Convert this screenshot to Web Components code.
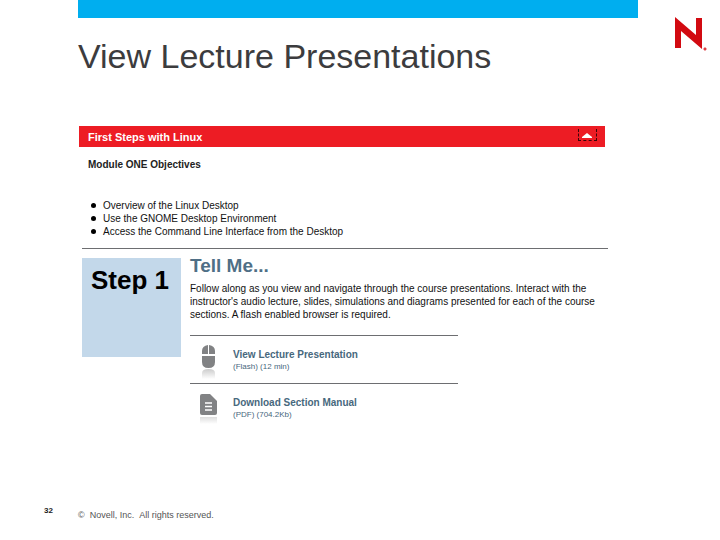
<!DOCTYPE html>
<html lang="en">
<head>
<meta charset="utf-8">
<title>View Lecture Presentations</title>
<style>
    body {
        margin: 0;
        background: #fff;
        font-family: "Liberation Sans", Arial, sans-serif;
    }
</style>
</head>
<body>

<slide-page>
    <novell-logo slot="logo"></novell-logo>
    <span slot="title">View Lecture Presentations</span>

    <section-bar>First Steps with Linux</section-bar>
    <module-objectives>
        <span slot="heading">Module ONE Objectives</span>
        <objective-item>Overview of the Linux Desktop</objective-item>
        <objective-item>Use the GNOME Desktop Environment</objective-item>
        <objective-item>Access the Command Line Interface from the Desktop</objective-item>
    </module-objectives>
    <course-step>
        <span slot="step">Step 1</span>
        <span slot="heading">Tell Me...</span>
        <span slot="text">Follow along as you view and navigate through the course presentations. Interact with the instructor's audio lecture, slides, simulations and diagrams presented for each of the course sections. A flash enabled browser is required.</span>
        <resource-link icon="mouse">View Lecture Presentation<span slot="meta">(Flash) (12 min)</span></resource-link>
        <resource-link icon="document">Download Section Manual<span slot="meta">(PDF) (704.2Kb)</span></resource-link>
    </course-step>

    <span slot="number">32</span>
    <span slot="copyright">© &nbsp;Novell, Inc. &nbsp;All rights reserved.</span>
</slide-page>

<script>
// HELPER

function define(name, markup) {
    customElements.define(name, class extends HTMLElement {
        constructor() {
            super();
            this.attachShadow({ mode: "open" }).innerHTML = markup;
        }
    });
}

// SLIDE

define("slide-page", `
    <style>
        :host {
            display: grid;
            grid-template-columns: 78px 1fr 82px;
            grid-template-rows: auto 1fr auto;
            min-height: 100vh;
        }
        .bar {
            height: 18px;
            background: #00aeef;
        }
        header {
            grid-column: 2;
        }
        h1 {
            margin: 0;
            padding-top: 18px;
            font-size: 34px;
            line-height: 40px;
            font-weight: normal;
            color: #3c3c3e;
            white-space: nowrap;
        }
        .logo {
            padding: 16px 0 0 36px;
        }
        main {
            grid-column: 2;
            padding: 50px 30px 0 0;
        }
        footer {
            grid-column: 1 / -1;
            display: grid;
            grid-template-columns: subgrid;
            padding-bottom: 19px;
            font-size: 8px;
            line-height: 12px;
            color: #555;
        }
        .number {
            padding-left: 44px;
            color: #222;
            font-weight: bold;
        }
        small {
            padding-top: 4px;
            font-size: 9px;
        }
    </style>
    <header>
        <div class="bar"></div>
        <h1><slot name="title"></slot></h1>
    </header>
    <div class="logo"><slot name="logo"></slot></div>
    <main><slot></slot></main>
    <footer>
        <span class="number"><slot name="number"></slot></span>
        <small><slot name="copyright"></slot></small>
    </footer>
`);

define("novell-logo", `
    <style>
        :host { display: block; }
        svg { display: block; }
    </style>
    <svg width="34" height="36" viewBox="0 0 34 36" role="img" aria-label="Novell">
        <path fill="#d20a11" d="M1 1 L22 19 V2 H28 V33 L7 15 V32 H1 Z"/>
        <circle cx="31" cy="33" r="1.2" fill="#e8666a" stroke="#d20a11" stroke-width=".6"/>
    </svg>
`);

// MODULE

define("section-bar", `
    <style>
        :host {
            display: flex;
            align-items: center;
            justify-content: space-between;
            height: 21px;
            margin: 0 3px 0 1px;
            padding: 0 8px 0 9px;
            background: #ed1c24;
            color: #fff;
        }
        h2 {
            margin: 0;
            font-size: 11px;
            line-height: 20px;
        }
        button {
            display: block;
            width: 19px;
            height: 12px;
            margin: 0 0 4px;
            padding: 0;
            border: 1px dashed #3a0508;
            border-top: 0;
            background: none;
        }
        svg { display: block; margin: 4px 0 0 3px; }
    </style>
    <h2><slot></slot></h2>
    <button type="button" aria-label="Collapse section">
        <svg width="10" height="6" viewBox="0 0 10 6"><path fill="#fff" d="M5 0 L10 4 V5 H0 V4 Z"/></svg>
    </button>
`);

define("module-objectives", `
    <style>
        :host {
            display: block;
            margin-left: 4px;
            padding: 12px 0 10px;
            border-bottom: 1px solid #6d6e71;
        }
        h3 {
            margin: 0 0 28px 6px;
            font-size: 10px;
            line-height: 12px;
            color: #222;
        }
        ul {
            margin: 0;
            padding: 0 0 0 9px;
        }
    </style>
    <h3><slot name="heading"></slot></h3>
    <ul role="list"><slot></slot></ul>
`);

define("objective-item", `
    <style>
        :host {
            display: flex;
            align-items: center;
            gap: 7px;
            font-size: 10px;
            line-height: 13px;
            color: #111;
        }
        :host::before {
            content: "";
            width: 5px;
            height: 5px;
            border-radius: 50%;
            background: #000;
        }
    </style>
    <span role="listitem"><slot></slot></span>
`);

// STEP

define("course-step", `
    <style>
        :host {
            display: grid;
            grid-template-columns: 99px 1fr;
            column-gap: 9px;
            align-items: start;
            margin-left: 4px;
            padding-top: 9px;
        }
        .step {
            height: 99px;
            padding: 9px;
            box-sizing: border-box;
            background: #c3d8ea;
            font-size: 26px;
            line-height: 26px;
            font-weight: bold;
            white-space: nowrap;
        }
        h3 {
            margin: 0;
            font-size: 19px;
            line-height: 16px;
            color: #4f6f86;
        }
        p {
            margin: 8px 0 14px;
            font-size: 10px;
            line-height: 13px;
            color: #111;
        }
        .links { width: 268px; }
    </style>
    <div class="step"><slot name="step"></slot></div>
    <div>
        <h3><slot name="heading"></slot></h3>
        <p><slot name="text"></slot></p>
        <div class="links"><slot></slot></div>
    </div>
`);

const icons = {
    mouse: `
        <svg width="20" height="36" viewBox="0 0 20 36" aria-hidden="true">
            <defs><linearGradient id="fade" x2="0" y2="1"><stop stop-color="#ccc"/><stop offset="1" stop-color="#fff"/></linearGradient></defs>
            <path fill="#818284" d="M9 0 V9 H3 V6 Q3 1 9 0 Z M10 0 Q16 1 16 6 V9 H10 Z M3 11 H16 V17 Q16 23 9.5 23 Q3 23 3 17 Z"/>
            <path fill="url(#fade)" d="M3 34 V28 Q3 24 9.5 24 Q16 24 16 28 V34 Z"/>
        </svg>`,
    document: `
        <svg width="20" height="36" viewBox="0 0 20 36" aria-hidden="true">
            <defs><linearGradient id="fade" x2="0" y2="1"><stop stop-color="#ddd"/><stop offset="1" stop-color="#fff"/></linearGradient></defs>
            <path fill="#818284" d="M3 1 H11 L18 8 V20 Q18 22 16 22 H3 Q1 22 1 20 V3 Q1 1 3 1 Z"/>
            <path stroke="#fff" stroke-width="1.5" d="M6 10 H13 M6 13.5 H13 M6 17 H13"/>
            <path fill="url(#fade)" d="M1 24 H18 V31 H1 Z"/>
        </svg>`
};

class ResourceLink extends HTMLElement {
    constructor() {
        super();
        this.attachShadow({ mode: "open" });
    }
    connectedCallback() {
        this.shadowRoot.innerHTML = `
            <style>
                :host {
                    display: flex;
                    gap: 14px;
                    height: 47px;
                    padding-left: 9px;
                    border-top: 1px solid #6d6e71;
                    color: #47687d;
                }
                svg { display: block; margin-top: 9px; }
                .text { padding-top: 12px; }
                a {
                    display: block;
                    font-size: 10px;
                    line-height: 13px;
                    font-weight: bold;
                    color: inherit;
                    text-decoration: none;
                }
                small {
                    display: block;
                    font-size: 8px;
                    line-height: 12px;
                }
            </style>
            ${icons[this.getAttribute("icon")]}
            <div class="text">
                <a href="#"><slot></slot></a>
                <small><slot name="meta"></slot></small>
            </div>
        `;
    }
}

customElements.define("resource-link", ResourceLink);
</script>
</body>
</html>
